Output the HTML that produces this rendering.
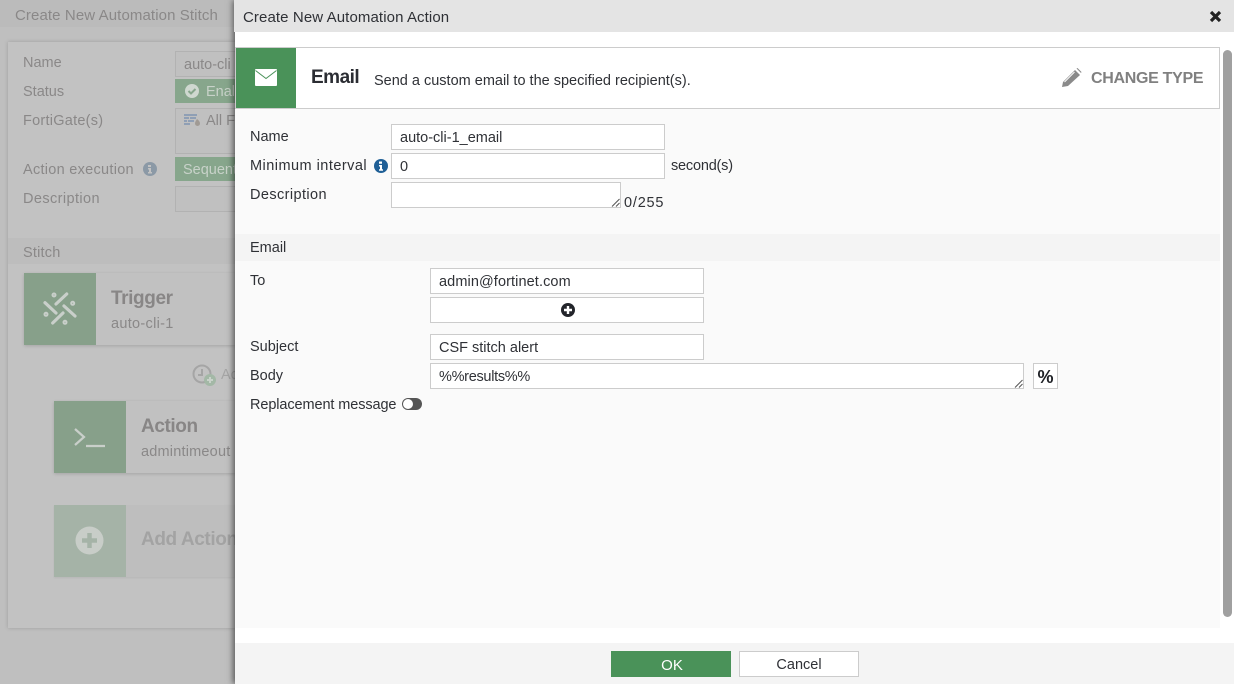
<!DOCTYPE html>
<html><head><meta charset="utf-8">
<style>
html,body{margin:0;padding:0;width:1234px;height:684px;overflow:hidden;background:#bfbfbf}
body{position:relative;font-family:"Liberation Sans",sans-serif;font-size:14.5px;color:#2f3136}
.a,.t,.i{position:absolute}
.t{white-space:nowrap;line-height:18px}
.g{color:#8a8888}
.h{font-size:19px;line-height:22px;font-weight:bold;letter-spacing:-.4px;color:#888686}
.i{box-sizing:border-box;background:#fff;border:1px solid #ccc;height:26px;line-height:27px;padding-left:8px;white-space:nowrap;overflow:hidden}
.bi{background:#c0c0c0;border-color:#b2b2b2;color:#8a8888}
svg{position:absolute;display:block}
</style></head><body>
<div class="a" style="left:0;top:0;width:235px;height:27px;background:#bbb"></div>
<div class="t g" style="left:15px;top:7px;font-size:15px;letter-spacing:.1px">Create New Automation Stitch</div>
<div class="a" style="left:8px;top:42px;width:227px;height:586px;background:#c2c2c2;box-shadow:0 0 4px rgba(0,0,0,.18)"></div>
<div class="a" style="left:8px;top:238px;width:227px;height:26px;background:#bdbdbd"></div>
<div class="t g" style="left:23px;top:54px">Name</div>
<div class="t g" style="left:23px;top:83px">Status</div>
<div class="t g" style="left:23px;top:112px;letter-spacing:.25px">FortiGate(s)</div>
<div class="t g" style="left:23px;top:161px;letter-spacing:.28px">Action execution</div>
<div class="t g" style="left:23px;top:190px;letter-spacing:.4px">Description</div>
<div class="t g" style="left:23px;top:244px;letter-spacing:.2px">Stitch</div>
<div class="i bi" style="left:175px;top:51px;width:70px">auto-cli</div>
<div class="a" style="left:175px;top:79px;width:60px;height:24px;background:#87a68c"></div>
<svg style="left:184px;top:83px" width="16" height="16" viewBox="0 0 16 16"><circle cx="8" cy="8" r="7" fill="#cfd8d0"/><path d="M4.500 8l2.500 2.500 4.500-4.500" stroke="#87a68c" stroke-width="2" fill="none"/></svg>
<div class="t" style="left:206px;top:83px;color:#c8d2c9">Enal</div>
<div class="i bi" style="left:175px;top:108px;width:70px;height:46px"></div>
<svg style="left:184px;top:114px" width="17" height="12" viewBox="0 0 17 12"><path d="M0 0h13v2H0zM0 3h5v2H0zM6 3h6v2H6zM0 6h3v2H0zM4 6h6v2H4zM0 9h6v2H0z" fill="#8f9fb5"/><path d="M13 5c2 1.500 3 3 3 4.500a2.500 2.500 0 0 1-5 0c0-1.500 1-3 2-4.500z" fill="#a09a94"/></svg>
<div class="t g" style="left:206px;top:112px">All F</div>
<svg style="left:143px;top:162px" width="14" height="14" viewBox="0 0 14 14"><circle cx="7" cy="7" r="7" fill="#8b99a6"/><path d="M5 3h3v2H5zM5 6h3v4h1v1.500H5V10h1V7.500H5z" fill="#c2c2c2"/></svg>
<div class="a" style="left:175px;top:157px;width:60px;height:24px;background:#87a68c"></div>
<div class="t" style="left:183px;top:161px;color:#c8d2c9">Sequent</div>
<div class="i bi" style="left:175px;top:186px;width:70px"></div>

<div class="a" style="left:24px;top:273px;width:211px;height:72px;background:#c1c1c1;box-shadow:0 1px 3px rgba(0,0,0,.15)"></div>
<div class="a" style="left:24px;top:273px;width:72px;height:72px;background:#87a08a"></div>
<svg style="left:42px;top:292px" width="36" height="36" viewBox="0 0 36 36" stroke="#c9cfca" stroke-width="3.200" stroke-linecap="round" fill="none"><path d="M14 12L24.700 2M3 10.700L14 21M22 14l11 10M10.700 31L21 21"/><circle cx="12" cy="3" r="1" stroke-width="3"/><circle cx="30.700" cy="11.300" r="1" stroke-width="3"/><circle cx="4" cy="22.300" r="1" stroke-width="3"/><circle cx="23" cy="30.300" r="1" stroke-width="3"/></svg>
<div class="t h" style="left:111px;top:288px">Trigger</div>
<div class="t g" style="left:111px;top:315px;letter-spacing:.3px">auto-cli-1</div>
<svg style="left:192px;top:363px" width="26" height="24" viewBox="0 0 26 24"><circle cx="10" cy="11" r="8.500" fill="none" stroke="#a5a5a5" stroke-width="2"/><path d="M10 6v6H6" fill="none" stroke="#a5a5a5" stroke-width="2"/><circle cx="18" cy="17" r="6" fill="#a3b8a6"/><path d="M15 17h6M18 14v6" stroke="#c9d2ca" stroke-width="2"/></svg>
<div class="t" style="left:221px;top:366px;color:#a5a5a5">Ac</div>

<div class="a" style="left:54px;top:401px;width:181px;height:72px;background:#c1c1c1;box-shadow:0 1px 3px rgba(0,0,0,.15)"></div>
<div class="a" style="left:54px;top:401px;width:72px;height:72px;background:#87a08a"></div>
<svg style="left:74px;top:428px" width="32" height="20" viewBox="0 0 32 20" fill="none" stroke="#c9cfca" stroke-width="2.200"><path d="M1 1l9 8-9 8M12 18h19"/></svg>
<div class="t h" style="left:141px;top:416px">Action</div>
<div class="t g" style="left:141px;top:443px;letter-spacing:.2px">admintimeout</div>

<div class="a" style="left:54px;top:505px;width:181px;height:72px;background:#bebebe;box-shadow:0 1px 2px rgba(0,0,0,.06)"></div>
<div class="a" style="left:54px;top:505px;width:72px;height:72px;background:#a5b3a7"></div>
<svg style="left:75px;top:526px" width="29" height="29" viewBox="0 0 29 29"><circle cx="14.500" cy="14.500" r="14" fill="#c8cdc8"/><path d="M14.500 7v15M7 14.500h15" stroke="#a5b3a7" stroke-width="4.500"/></svg>
<div class="t h" style="left:141px;top:529px;color:#a3a3a3">Add Action</div>

<div class="a" style="left:235px;top:0;width:999px;height:684px;background:#fff;box-shadow:-2px 0 6px rgba(0,0,0,.55)"></div>
<div class="a" style="left:234px;top:0;width:1000px;height:32px;background:#e4e4e4"></div>
<div class="t" style="left:243px;top:9px;font-size:15px;letter-spacing:.1px">Create New Automation Action</div>
<svg style="left:1209px;top:10px" width="13" height="13" viewBox="0 0 13 13"><path d="M2 2l9 9M11 2l-9 9" stroke="#222" stroke-width="3.200"/></svg>

<div class="a" style="left:235px;top:108px;width:985px;height:520px;background:#fafafa"></div>
<div class="a" style="box-sizing:border-box;left:235px;top:47px;width:985px;height:62px;border:1px solid #ccc;background:#fff"></div>
<div class="a" style="left:236px;top:48px;width:60px;height:60px;background:#4a9259"></div>
<svg style="left:255px;top:69px" width="22" height="17" viewBox="0 0 22 17"><rect width="22" height="17" rx="1" fill="#fff"/><path d="M0.500 1.500L11 9.500 21.500 1.500" fill="none" stroke="#4a9259" stroke-width="1"/></svg>
<div class="t" style="left:311px;top:66px;font-size:19px;line-height:24px;font-weight:bold;color:#2b2d33;letter-spacing:-.5px">Email</div>
<div class="t" style="left:374px;top:72px">Send a custom email to the specified recipient(s).</div>
<svg style="left:1061px;top:68px" width="21" height="20" viewBox="0 0 21 20"><path d="M1 19l1-5L14 2l5 5L7 18z" fill="#8a8a8a"/><path d="M15.500.500l1-.5 4 4-.5 1z" fill="#8a8a8a"/><path d="M3.500 14l10-10" stroke="#fff" stroke-width="1"/></svg>
<div class="t" style="left:1091px;top:70px;font-size:16px;font-weight:bold;color:#808080;letter-spacing:-.3px">CHANGE TYPE</div>

<div class="t" style="left:250px;top:128px">Name</div>
<div class="i" style="left:391px;top:124px;width:274px">auto-cli-1_email</div>
<div class="t" style="left:250px;top:157px;letter-spacing:.47px">Minimum interval</div>
<svg style="left:374px;top:159px" width="14" height="14" viewBox="0 0 14 14"><circle cx="7" cy="7" r="7" fill="#1f5f96"/><path d="M5 2.500h3v2.200H5zM5 6h3v4.200h1v1.500H5v-1.500h1V7.500H5z" fill="#fff"/></svg>
<div class="i" style="left:391px;top:153px;width:274px">0</div>
<div class="t" style="left:671px;top:157px;letter-spacing:-.2px">second(s)</div>
<div class="t" style="left:250px;top:186px;letter-spacing:.4px">Description</div>
<div class="i" style="left:391px;top:182px;width:230px"></div>
<svg style="left:611px;top:198px" width="9" height="9" viewBox="0 0 9 9" stroke="#555" stroke-width="1"><path d="M1 8.500l7.500-7.500M5 8.500l3.500-3.500"/></svg>
<div class="t" style="left:624px;top:194px;letter-spacing:.8px">0/255</div>

<div class="a" style="left:235px;top:234px;width:985px;height:27px;background:#f4f4f4"></div>
<div class="t" style="left:250px;top:239px">Email</div>

<div class="t" style="left:250px;top:272px">To</div>
<div class="i" style="left:430px;top:268px;width:274px;letter-spacing:.1px">admin@fortinet.com</div>
<div class="i" style="left:430px;top:297px;width:274px"></div>
<svg style="left:561px;top:303px" width="14" height="14" viewBox="0 0 14 14"><circle cx="7" cy="7" r="7" fill="#23252b"/><path d="M7 3v8M3 7h8" stroke="#fff" stroke-width="2.400"/></svg>
<div class="t" style="left:250px;top:338px">Subject</div>
<div class="i" style="left:430px;top:334px;width:274px">CSF stitch alert</div>
<div class="t" style="left:250px;top:367px">Body</div>
<div class="i" style="left:430px;top:363px;width:594px;letter-spacing:-.3px">%%results%%</div>
<svg style="left:1014px;top:379px" width="9" height="9" viewBox="0 0 9 9" stroke="#555" stroke-width="1"><path d="M1 8.500l7.500-7.500M5 8.500l3.500-3.500"/></svg>
<div class="i" style="left:1033px;top:363px;width:25px;padding:0;text-align:center;font-size:18px;line-height:26px;font-weight:bold;color:#1d1f24">%</div>
<div class="t" style="left:250px;top:396px;letter-spacing:-.1px">Replacement message</div>
<div class="a" style="left:402px;top:398px;width:20px;height:12px;border-radius:6px;background:#555"></div>
<div class="a" style="left:403px;top:399px;width:10px;height:10px;border-radius:5px;background:#fff"></div>

<div class="a" style="left:1223px;top:50px;width:9px;height:567px;border-radius:5px;background:#a0a0a0"></div>

<div class="a" style="left:235px;top:643px;width:999px;height:41px;background:#f4f4f4"></div>
<div class="a" style="box-sizing:border-box;left:611px;top:651px;width:120px;height:26px;padding-left:2px;background:#4a9259;color:#fff;text-align:center;line-height:29px;font-size:15px">OK</div>
<div class="a" style="box-sizing:border-box;left:739px;top:651px;width:120px;height:26px;background:#fff;border:1px solid #ccc;text-align:center;line-height:27px">Cancel</div>
</body></html>
